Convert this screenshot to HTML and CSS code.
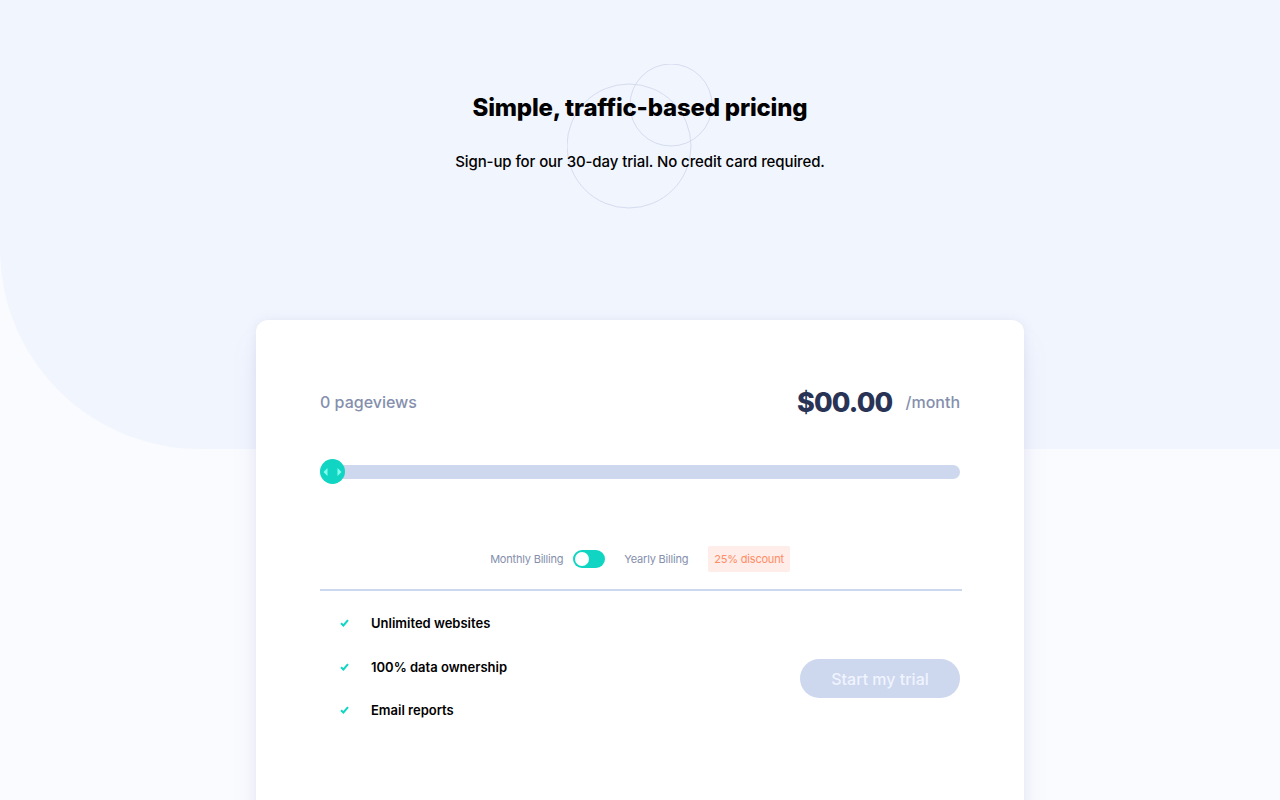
FILE: index.html
```html
<!DOCTYPE html>
<html lang="en">
<head>
<meta charset="utf-8">
<title>Pricing</title>
<link rel="stylesheet" href="styles.css">
</head>
<body>
<header class="hero">
  <svg class="pattern" width="160" height="160" viewBox="0 0 160 160" aria-hidden="true">
    <circle cx="62" cy="82" r="62" fill="none" stroke="#d6dcf0" stroke-width="1"/>
    <circle cx="104" cy="41" r="41" fill="none" stroke="#d6dcf0" stroke-width="1"/>
  </svg>
  <h1 class="title">Simple, traffic-based pricing</h1>
  <p class="subtitle">Sign-up for our 30-day trial. No credit card required.</p>
</header>
<main class="card">
  <div class="top-row">
    <span class="pageviews">0 pageviews</span>
    <div class="price"><span class="amount">$00.00</span><span class="per">/month</span></div>
  </div>
  <div class="slider">
    <div class="track"></div>
    <div class="thumb">
      <svg width="19" height="10" viewBox="0 0 19 10" aria-hidden="true">
        <path d="M4.5 1 L0.5 5 L4.5 9 Z" fill="#80ffef"/>
        <path d="M14.5 1 L18.5 5 L14.5 9 Z" fill="#80ffef"/>
      </svg>
    </div>
  </div>
  <div class="billing">
    <span class="bill-label">Monthly Billing</span>
    <span class="toggle"><span class="knob"></span></span>
    <span class="bill-label">Yearly Billing</span>
    <span class="discount">25% discount</span>
  </div>
  <div class="bottom">
    <ul class="features">
      <li><svg class="check" width="9" height="8" viewBox="0 0 9 8" aria-hidden="true"><path d="M1 4.2 L3.4 6.5 L8 1.2" fill="none" stroke="#10d5c2" stroke-width="2"/></svg>Unlimited websites</li>
      <li><svg class="check" width="9" height="8" viewBox="0 0 9 8" aria-hidden="true"><path d="M1 4.2 L3.4 6.5 L8 1.2" fill="none" stroke="#10d5c2" stroke-width="2"/></svg>100% data ownership</li>
      <li><svg class="check" width="9" height="8" viewBox="0 0 9 8" aria-hidden="true"><path d="M1 4.2 L3.4 6.5 L8 1.2" fill="none" stroke="#10d5c2" stroke-width="2"/></svg>Email reports</li>
    </ul>
    <button class="cta">Start my trial</button>
  </div>
</main>
</body>
</html>
```

FILE: styles.css
```css
* { box-sizing: border-box; }
html, body { margin: 0; padding: 0; }
body {
  background: #fafbff;
  font-family: "Inter", "Noto Sans", sans-serif;
  overflow: hidden;
  height: 800px;
}
.hero {
  position: relative;
  height: 449px;
  background: #f1f5fe;
  border-bottom-left-radius: 200px;
  display: flex;
  flex-direction: column;
  align-items: center;
  padding-top: 91px;
}
.pattern {
  position: absolute;
  left: 567px;
  top: 64px;
}
.title {
  position: relative;
  margin: 0;
  font-size: 24px;
  line-height: 34px;
  font-weight: 800;
  color: #000;
  letter-spacing: -0.2px;
}
.subtitle {
  position: relative;
  margin: 27px 0 0;
  font-size: 15px;
  line-height: 20px;
  font-weight: 500;
  color: #000;
  letter-spacing: -0.1px;
}
.card {
  position: relative;
  width: 768px;
  margin: -129px auto 0;
  height: 560px;
  background: #fff;
  border-radius: 12px;
  box-shadow: 0 20px 30px -5px rgba(127, 137, 185, 0.15), 0 0 12px rgba(127, 137, 185, 0.12);
  padding: 64px 64px 0;
}
.top-row {
  display: flex;
  justify-content: space-between;
  align-items: center;
  height: 36px;
}
.pageviews {
  font-size: 16px;
  font-weight: 500;
  color: #858fad;
}
.price { display: flex; align-items: center; gap: 13px; }
.amount {
  font-size: 27px;
  font-weight: 800;
  color: #293356;
  letter-spacing: -0.8px;
}
.per {
  font-size: 16px;
  font-weight: 500;
  color: #858fad;
}
.slider {
  position: relative;
  margin-top: 39px;
  height: 25px;
  display: flex;
  align-items: center;
}
.track {
  width: 640px;
  height: 14px;
  border-radius: 7px;
  background: #cdd7ee;
}
.thumb {
  position: absolute;
  left: 0;
  top: 0;
  width: 25px;
  height: 25px;
  border-radius: 50%;
  background: #10d5c2;
  display: flex;
  align-items: center;
  justify-content: center;
}
.thumb svg { display: block; }
.billing {
  margin-top: 62px;
  display: flex;
  align-items: center;
  justify-content: center;
  height: 26px;
}
.bill-label {
  font-size: 11px;
  font-weight: 400;
  color: #858fad;
  letter-spacing: -0.2px;
}
.toggle {
  margin: 0 19px 0 10px;
  width: 32px;
  height: 18px;
  border-radius: 9px;
  background: #10d5c2;
  display: flex;
  align-items: center;
  padding-left: 2px;
}
.knob {
  width: 14px;
  height: 14px;
  border-radius: 50%;
  background: #fff;
}
.discount {
  margin-left: 20px;
  background: #feede8;
  color: #ff8c66;
  font-size: 11px;
  font-weight: 400;
  letter-spacing: -0.2px;
  height: 26px;
  line-height: 26px;
  padding: 0 6px;
  border-radius: 2px;
}
.bottom {
  margin-top: 17px;
  border-top: 2px solid #cdd7ee;
  width: 642px;
  display: flex;
  justify-content: space-between;
  align-items: flex-start;
  padding: 23px 2px 0 0;
}
.features {
  list-style: none;
  margin: 0;
  padding: 0 0 0 20px;
  display: flex;
  flex-direction: column;
  gap: 25.5px;
}
.features li {
  display: flex;
  align-items: center;
  height: 18px;
  font-size: 13px;
  font-weight: 600;
  color: #000;
}
.check {
  display: block;
  margin-right: 22px;
  flex: none;
}
.cta {
  width: 160px;
  height: 39px;
  border: 0;
  border-radius: 20px;
  background: #cdd7ee;
  color: #f0f4ff;
  font-family: "Inter", "Noto Sans", sans-serif;
  font-size: 16px;
  font-weight: 500;
  margin-top: 45px;
}
```
